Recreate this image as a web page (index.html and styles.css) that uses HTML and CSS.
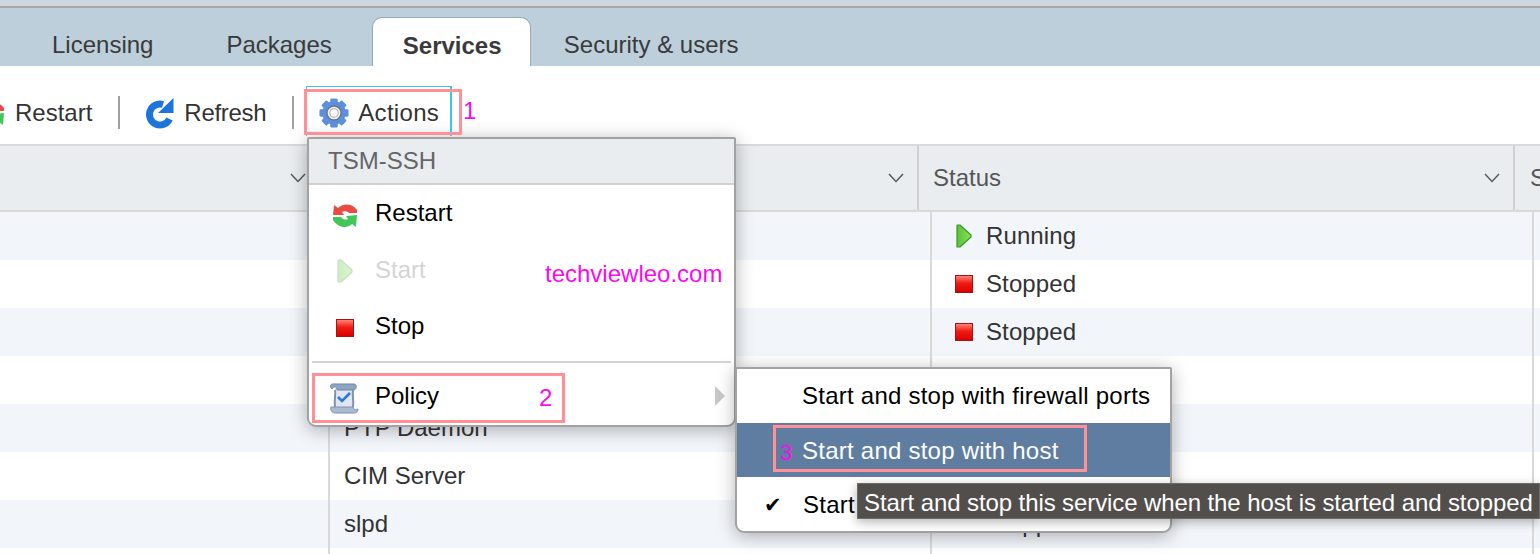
FILE: index.html
```html
<!DOCTYPE html>
<html lang="en">
<head>
    <meta charset="UTF-8">
    <title>Services</title>
    <link rel="stylesheet" href="styles.css">
</head>
<body>
    <svg class="defs" width="0" height="0">
        <defs>
            <linearGradient id="redFill" x1="0" y1="0" x2="0" y2="1">
                <stop offset="0" stop-color="#ff8a80"/>
                <stop offset="0.45" stop-color="#f01c14"/>
                <stop offset="1" stop-color="#d80000"/>
            </linearGradient>
            <linearGradient id="greenFill" x1="0" y1="0" x2="1" y2="0">
                <stop offset="0" stop-color="#58c43a"/>
                <stop offset="1" stop-color="#8cdc58"/>
            </linearGradient>
            <symbol id="stopIcon" viewBox="0 0 18 18">
                <rect x="0.5" y="0.5" width="17" height="17" fill="url(#redFill)" stroke="#a81414"/>
            </symbol>
            <symbol id="playIcon" viewBox="0 0 18 24">
                <path d="M2 1 L5 1 L16 11 V13 L5 23 L2 23 Z" fill="url(#greenFill)" stroke="#3c9a2c" stroke-width="1.2" stroke-linejoin="round"/>
            </symbol>
            <symbol id="restartIcon" viewBox="0 0 26 26">
                <path d="M1 13 L2 3 L6 6 C11 1 20 1 25 8 L25 11 L17 11 C15 9 12 9 10 10 L12 13 Z" fill="#ea4a44"/>
                <path d="M25 13 L24 25 L20 22 C15 27 6 26 1 18 L1 15 L9 15 C11 18 14 18 16 17 L14 14 Z" fill="#42c658"/>
            </symbol>
            <symbol id="chevron" viewBox="0 0 16 10">
                <path d="M1 1 L8 8.5 L15 1" fill="none" stroke="#555" stroke-width="1.4"/>
            </symbol>
        </defs>
    </svg>

    <div class="top-strip"></div>

    <nav class="tabs">
        <a class="tab">Licensing</a>
        <a class="tab">Packages</a>
        <a class="tab active">Services</a>
        <a class="tab">Security &amp; users</a>
    </nav>

    <div class="toolbar">
        <button class="tool first">
            <svg class="tool-icon small"><use href="#restartIcon"/></svg>
            Restart
        </button>
        <span class="tool-sep"></span>
        <button class="tool refresh">
            <svg class="tool-icon tall" viewBox="0 0 30 32">
                <path d="M18 7.500 A10.500 10.500 0 1 0 24.500 22" fill="none" stroke="#1c74dc" stroke-width="7"/>
                <path d="M28.500 1 V16 H13 Z" fill="#1c74dc"/>
            </svg>
            Refresh
        </button>
        <span class="tool-sep"></span>
        <button class="tool actions">
            <svg class="tool-icon" viewBox="0 0 32 32">
                <g fill="#5c90de">
                    <circle cx="16" cy="16" r="12.500"/>
                    <rect x="12" y="0.500" width="8" height="31" rx="1.500"/>
                    <rect x="12" y="0.500" width="8" height="31" rx="1.500" transform="rotate(45 16 16)"/>
                    <rect x="12" y="0.500" width="8" height="31" rx="1.500" transform="rotate(90 16 16)"/>
                    <rect x="12" y="0.500" width="8" height="31" rx="1.500" transform="rotate(135 16 16)"/>
                </g>
                <circle cx="16" cy="16" r="7.500" fill="#f4f4f4" stroke="#6d7580" stroke-width="1.500"/>
                <circle cx="16" cy="16" r="4.500" fill="#fff" stroke="#a8aeb6" stroke-width="1.200"/>
            </svg>
            Actions
        </button>
    </div>

    <div class="thead">
        <div class="th col-one"><svg class="chev"><use href="#chevron"/></svg></div>
        <div class="th col-two"><svg class="chev"><use href="#chevron"/></svg></div>
        <div class="th col-three">Status<svg class="chev"><use href="#chevron"/></svg></div>
        <div class="th col-four">S</div>
    </div>

    <div class="tbody">
        <div class="row">
            <div class="cell name-a"></div><div class="cell name-b"></div>
            <div class="cell status"><svg class="play"><use href="#playIcon"/></svg>Running</div>
            <div class="cell"></div>
        </div>
        <div class="row">
            <div class="cell name-a"></div><div class="cell name-b"></div>
            <div class="cell status"><svg class="stop"><use href="#stopIcon"/></svg>Stopped</div>
            <div class="cell"></div>
        </div>
        <div class="row">
            <div class="cell name-a"></div><div class="cell name-b"></div>
            <div class="cell status"><svg class="stop"><use href="#stopIcon"/></svg>Stopped</div>
            <div class="cell"></div>
        </div>
        <div class="row">
            <div class="cell name-a"></div><div class="cell name-b"></div>
            <div class="cell status"></div>
            <div class="cell"></div>
        </div>
        <div class="row">
            <div class="cell name-a"></div><div class="cell name-b">PTP Daemon</div>
            <div class="cell status"></div>
            <div class="cell"></div>
        </div>
        <div class="row">
            <div class="cell name-a"></div><div class="cell name-b">CIM Server</div>
            <div class="cell status"></div>
            <div class="cell"></div>
        </div>
        <div class="row">
            <div class="cell name-a"></div><div class="cell name-b">slpd</div>
            <div class="cell status"><svg class="stop"><use href="#stopIcon"/></svg>Stopped</div>
            <div class="cell"></div>
        </div>
        <div class="row">
            <div class="cell name-a"></div><div class="cell name-b"></div>
            <div class="cell status"></div>
            <div class="cell"></div>
        </div>
    </div>

    <!-- actions dropdown -->
    <div class="menu">
        <div class="menu-title">TSM-SSH</div>
        <div class="menu-item">
            <span class="menu-icon"><svg class="icon-restart"><use href="#restartIcon"/></svg></span>Restart
        </div>
        <div class="menu-item disabled">
            <span class="menu-icon"><svg class="play"><use href="#playIcon"/></svg></span>Start
        </div>
        <div class="menu-item">
            <span class="menu-icon"><svg class="stop"><use href="#stopIcon"/></svg></span>Stop
        </div>
        <div class="menu-sep"></div>
        <div class="menu-item policy">
            <span class="menu-icon">
                <svg class="icon-policy" viewBox="0 0 30 32">
                    <path d="M6 6 H25 V25 H6 Z" fill="#dfe7f2"/>
                    <path d="M3 2 H25 C28 2 28 7 25 8 H8 C8 4 5 4 3 7 C1 5 1 3 3 2 Z" fill="#8ea6c4" stroke="#6f83a0"/>
                    <path d="M6 8 C7 12 5 16 6 25" fill="none" stroke="#7f93b0" stroke-width="2"/>
                    <path d="M24 8 C23 13 25 18 24 25" fill="none" stroke="#7f93b0" stroke-width="2"/>
                    <path d="M2 25 H24 C25 28 27 28 29 27 C29 30 27 31 25 31 H6 C3 31 1 28 2 25 Z" fill="#a9bbd2" stroke="#7f93b0"/>
                    <path d="M9 15 L13 19 L21 11" fill="none" stroke="#2a78dc" stroke-width="2.600"/>
                </svg>
            </span>Policy
            <span class="submenu-arrow"></span>
        </div>
    </div>

    <!-- policy submenu -->
    <div class="submenu">
        <div class="sub-item first">Start and stop with firewall ports</div>
        <div class="sub-item current">Start and stop with host</div>
        <div class="sub-item last"><span class="check">&#10004;</span>Start</div>
    </div>

    <div class="tooltip">Start and stop this service when the host is started and stopped</div>

    <!-- annotations drawn on top of the screenshot -->
    <div class="focus-box"></div>
    <div class="mark mark-actions"></div>
    <div class="mark mark-policy"></div>
    <div class="mark mark-host"></div>
    <span class="note note-1">1</span>
    <span class="note note-2">2</span>
    <span class="note note-3">3</span>
    <span class="note note-site">techviewleo.com</span>
</body>
</html>
```

FILE: styles.css
```css
html, body {
    margin: 0;
    padding: 0;
    height: 554px;
    overflow: hidden;
}
body {
    position: relative;
    font-family: "Liberation Sans", Arial, sans-serif;
    font-size: 24px;
    color: #333;
    background-color: #fff;
}
svg {
    filter: blur(0.3px);
}
.defs {
    position: absolute;
}
.top-strip {
    height: 6px;
    background-color: #cfd6dd;
    border-bottom: 2px solid #a8a8a8;
}

/* tabs */
.tabs {
    display: flex;
    align-items: flex-end;
    height: 58px;
    padding-left: 21px;
    background-color: #bccfdb;
}
.tab {
    height: 49px;
    line-height: 56px;
    padding: 0 31px;
    margin-right: 11px;
    color: #3a3a3a;
    box-sizing: border-box;
}
.tab:nth-child(2) {
    margin-right: 9px;
}
.tab.active {
    width: 159px;
    padding: 0 30px;
    margin-right: 2px;
    font-weight: bold;
    background-color: #fff;
    border: 1px solid #98a8b4;
    border-bottom: none;
    border-radius: 10px 10px 0 0;
}

/* toolbar */
.toolbar {
    display: flex;
    align-items: center;
    height: 80px;
    padding-top: 15px;
    box-sizing: border-box;
    border-bottom: 2px solid #d9d9d9;
}
.tool {
    display: flex;
    align-items: center;
    gap: 9px;
    padding: 0 26px;
    font: inherit;
    color: inherit;
    background: none;
    border: none;
}
.tool.first {
    padding: 0 26px 0 0;
    margin-left: -21px;
    gap: 10px;
}
.tool.refresh {
    padding-left: 25px;
    letter-spacing: -0.3px;
}
.tool.actions {
    padding: 0 0 0 25px;
    letter-spacing: 0.3px;
}
.tool-icon {
    width: 30px;
    height: 30px;
}
.tool-icon.tall {
    height: 32px;
}
.tool-icon.small {
    width: 26px;
    height: 26px;
}
.tool-sep {
    width: 2px;
    height: 33px;
    background-color: #a0a0a0;
}

/* table */
.thead {
    display: flex;
    height: 64px;
    color: #555;
    background-color: #e9edf0;
    border-bottom: 2px solid #d9d9d9;
}
.th {
    display: flex;
    flex-shrink: 0;
    align-items: center;
    justify-content: space-between;
    box-sizing: border-box;
    border-right: 2px solid #d0d0d0;
    padding-left: 13px;
    padding-right: 13px;
}
.th.col-one {
    width: 321px;
    justify-content: flex-end;
}
.th.col-two {
    width: 598px;
    justify-content: flex-end;
}
.th.col-three {
    width: 596px;
    padding-left: 14px;
}
.th.col-four {
    width: 25px;
    border-right: none;
    padding: 0 0 0 15px;
    overflow: hidden;
}
.chev {
    width: 16px;
    height: 10px;
}
.row {
    display: flex;
    height: 48px;
    align-items: stretch;
}
.row:nth-child(odd) {
    background-color: #f2f5fa;
}
.row:last-child {
    height: 6px;
}
.cell {
    display: flex;
    align-items: center;
    box-sizing: border-box;
    border-right: 2px solid #d9d9d9;
}
.cell:last-child {
    border-right: none;
}
.name-a {
    width: 330px;
}
.name-b {
    width: 602px;
    padding-left: 14px;
}
.status {
    width: 602px;
    padding-left: 23px;
    gap: 13px;
    letter-spacing: 0.1px;
}
.stop {
    width: 18px;
    height: 18px;
}
.play {
    width: 18px;
    height: 24px;
}

/* menus */
.menu {
    position: absolute;
    left: 307px;
    top: 137px;
    width: 429px;
    height: 290px;
    box-sizing: border-box;
    color: #000;
    background-color: #fff;
    border: 2px solid #a2a2a2;
    border-radius: 2px 2px 9px 9px;
    box-shadow: 0 3px 18px rgba(0, 0, 0, 0.3);
}
.menu-title {
    height: 46px;
    line-height: 44px;
    padding-left: 19px;
    color: #666;
    background-color: #e9edf0;
    border-bottom: 2px solid #d0d0d0;
    box-sizing: border-box;
}
.menu-item {
    display: flex;
    align-items: center;
    height: 56.5px;
    box-sizing: border-box;
}
.menu-item.disabled {
    color: #d4d4d4;
}
.menu-item.disabled svg {
    opacity: 0.3;
}
.menu-item.policy {
    position: relative;
    margin-top: 5px;
}
.menu-icon {
    display: flex;
    align-items: center;
    justify-content: center;
    width: 66px;
    height: 30px;
    padding-left: 5px;
    margin-top: 3px;
    box-sizing: border-box;
}
.policy .menu-icon {
    padding-left: 3px;
    margin-top: 5px;
}
.icon-restart {
    width: 26px;
    height: 26px;
}
.icon-policy {
    width: 30px;
    height: 32px;
}
.menu-sep {
    height: 2px;
    margin: 6px 3px 0;
    background-color: #d4d4d4;
}
.submenu-arrow {
    position: absolute;
    right: 9px;
    top: 18px;
    border-left: 10px solid #c8c8c8;
    border-top: 10px solid transparent;
    border-bottom: 10px solid transparent;
}
.submenu {
    position: absolute;
    left: 735px;
    top: 367px;
    width: 437px;
    height: 166px;
    box-sizing: border-box;
    color: #000;
    background-color: #fff;
    border: 2px solid #a2a2a2;
    border-radius: 2px 2px 9px 9px;
    box-shadow: 0 3px 18px rgba(0, 0, 0, 0.3);
}
.sub-item {
    position: relative;
    height: 54px;
    line-height: 55px;
    padding-left: 65px;
    white-space: nowrap;
    letter-spacing: 0.24px;
}
.sub-item.first {
    line-height: 53px;
}
.sub-item.current {
    color: #fff;
    background-color: #5f7da0;
}
.sub-item.last {
    padding-left: 66px;
}
.check {
    position: absolute;
    left: 27px;
    top: 1px;
    font-size: 21px;
    font-family: "DejaVu Sans", sans-serif;
}
.tooltip {
    position: absolute;
    left: 857px;
    top: 483px;
    width: 683px;
    height: 36px;
    line-height: 38px;
    padding-left: 6px;
    box-sizing: border-box;
    white-space: nowrap;
    overflow: hidden;
    letter-spacing: -0.1px;
    color: #fff;
    background-color: #524e4b;
    border: 1px solid #6e6a67;
    box-shadow: 0 3px 10px rgba(0, 0, 0, 0.3);
}

/* annotations */
.focus-box {
    position: absolute;
    left: 306px;
    top: 86px;
    width: 143px;
    height: 49px;
    border: solid #3cc4f4;
    border-width: 1px 2px 0 1px;
}
.mark {
    position: absolute;
    box-sizing: border-box;
    border: 3px solid #ff9095;
}
.mark-actions {
    left: 304px;
    top: 89px;
    width: 158px;
    height: 46px;
}
.mark-policy {
    left: 312px;
    top: 373px;
    width: 253px;
    height: 50px;
}
.mark-host {
    left: 773px;
    top: 425px;
    width: 314px;
    height: 47px;
}
.note {
    position: absolute;
    color: #f70cee;
    line-height: 28px;
}
.note-1 {
    left: 463px;
    top: 97px;
}
.note-2 {
    left: 539px;
    top: 384px;
}
.note-3 {
    left: 780px;
    top: 439px;
    font-size: 22px;
}
.note-site {
    left: 545px;
    top: 260px;
}
```
